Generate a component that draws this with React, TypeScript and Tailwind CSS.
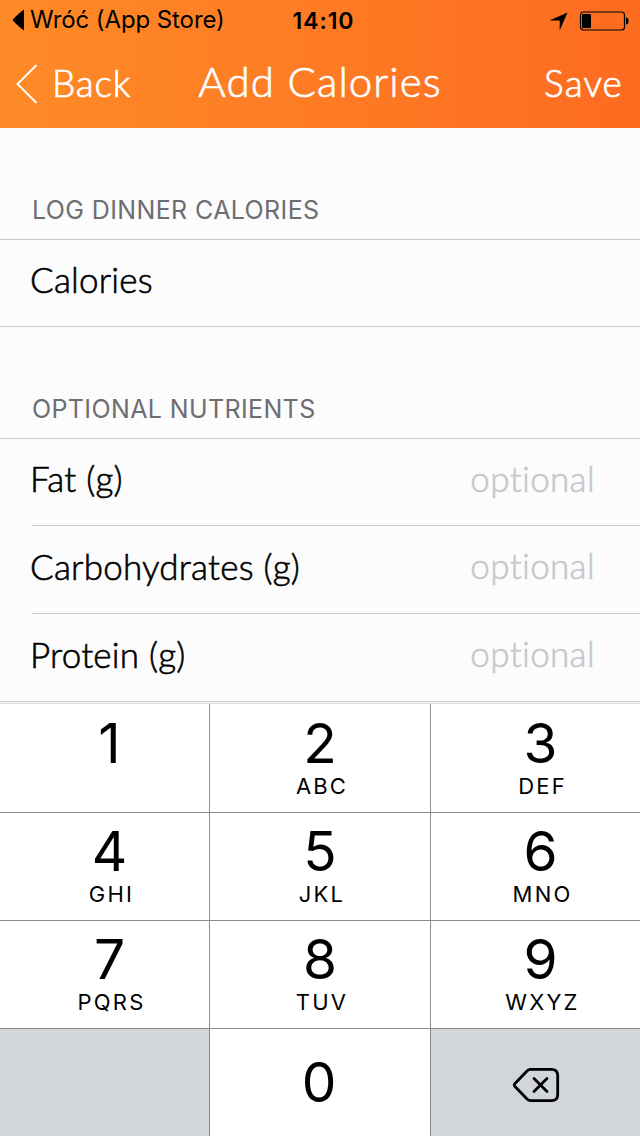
import React from 'react';

interface PadKey {
  digit: string;
  letters?: string;
}

const keyRows: PadKey[][] = [
  [{ digit: '1' }, { digit: '2', letters: 'ABC' }, { digit: '3', letters: 'DEF' }],
  [
    { digit: '4', letters: 'GHI' },
    { digit: '5', letters: 'JKL' },
    { digit: '6', letters: 'MNO' },
  ],
  [
    { digit: '7', letters: 'PQRS' },
    { digit: '8', letters: 'TUV' },
    { digit: '9', letters: 'WXYZ' },
  ],
];

const StatusBar: React.FC = () => (
  <div className="grid h-10 grid-cols-[1fr_auto_1fr] items-center font-['Inter',sans-serif] text-black">
    <div className="flex items-center pl-3">
      <svg width="12" height="22" viewBox="0 0 12 22">
        <path d="M12 0.5V21.5C8 19 4 15 0.5 11C4 7 8 3 12 0.5Z" fill="currentColor" />
      </svg>
      <span className="ml-[6px] text-[24px] leading-10 tracking-[-0.1px] whitespace-nowrap">
        Wróć (App Store)
      </span>
    </div>
    <span className="pt-[2px] pl-[7px] text-[23px] leading-[38px] font-semibold tracking-[0.9px]">14:10</span>
    <div className="flex items-center justify-end pr-[11px]">
      <svg className="mt-[2px]" width="19" height="19" viewBox="0 0 19 19">
        <path d="M18.5 0.5L10.7 18.5V8.6H0.5Z" fill="currentColor" />
      </svg>
      <svg className="mt-px ml-[11px]" width="50" height="20" viewBox="0 0 50 20">
        <rect x="1.5" y="1" width="44" height="18" rx="3" fill="none" stroke="currentColor" strokeWidth="1.2" />
        <rect x="3" y="3" width="9" height="14" rx="1" fill="currentColor" />
        <path d="M47 6.5C50.5 6.5 50.5 13.5 47 13.5Z" fill="currentColor" />
      </svg>
    </div>
  </div>
);

const NavBar: React.FC = () => (
  <div className="grid h-[88px] grid-cols-[1fr_auto_1fr] items-center font-['Lato',sans-serif] font-light text-white [-webkit-text-stroke:0.7px]">
    <button className="flex items-center pl-4">
      <svg width="22" height="40" viewBox="0 0 22 40" fill="none" stroke="currentColor" strokeWidth="2">
        <path d="M20.5 1L1.5 20L20.5 39" />
      </svg>
      <span className="ml-[14px] pb-[3px] text-[37px] leading-[44px] tracking-[0.8px]">Back</span>
    </button>
    <h1 className="pb-[6px] text-[42px] leading-[44px] tracking-[1.1px]">Add Calories</h1>
    <button className="pr-[17px] pb-[3px] text-right text-[37px] leading-[44px] tracking-[1.1px]">Save</button>
  </div>
);

const SectionTitle: React.FC<{ children: React.ReactNode }> = ({ children }) => (
  <h2 className="flex h-[112px] items-end border-b border-[#c8c7cc] pb-[13px] pl-8 font-['Inter',sans-serif] text-[25px] leading-[32px] font-normal tracking-[0.38px] text-[#6d6d72]">
    {children}
  </h2>
);

const FieldLabel: React.FC<{ children: React.ReactNode }> = ({ children }) => (
  <span className="-ml-[2px] pb-[8px] tracking-[0.22px] [-webkit-text-stroke:0.6px]">{children}</span>
);

const OptionalField: React.FC = () => (
  <span className="pb-[9px] tracking-[0.35px] text-[#c7c7cd] [-webkit-text-stroke:0.6px]">optional</span>
);

const NumberPad: React.FC = () => (
  <div className="grid grid-cols-[210px_221px_209px] bg-white font-['Inter',sans-serif] text-black">
    {keyRows.map((row, r) =>
      row.map((key, col) => (
        <button
          key={key.digit}
          className={`flex flex-col items-center border-b border-[#8c8c8c] ${
            r === 0 ? 'h-[109px] pt-[11px]' : 'h-[108px] pt-[10px]'
          } ${col < 2 ? 'border-r' : ''} ${col === 1 ? '' : 'pl-[10px]'}`}
        >
          <span className="text-[55px] leading-[56px]">{key.digit}</span>
          {key.letters && (
            <span className="pl-[4px] text-[22px] leading-[30px] tracking-[2.2px]">{key.letters}</span>
          )}
        </button>
      ))
    )}
    <div className="h-[107px] border-r border-[#8c8c8c] bg-[#d2d5da]" />
    <button className="flex h-[107px] items-center justify-center border-r border-[#8c8c8c] pr-[2px] pb-[2px] text-[55px] leading-[56px]">
      0
    </button>
    <button aria-label="Delete" className="flex h-[107px] items-center justify-center bg-[#d2d5da] pt-[4px]">
      <svg width="48" height="36" viewBox="0 0 48 36" fill="none" stroke="currentColor" strokeWidth="2.8" strokeLinecap="round" strokeLinejoin="round">
        <path d="M18.5 2.3H39.5C43.8 2.3 45.7 4.2 45.7 8.5V27.5C45.7 31.8 43.8 33.7 39.5 33.7H18.5C17 33.7 16 33 15 32L3 19.5C2 18.4 2 17.6 3 16.5L15 4C16 3 17 2.3 18.5 2.3Z" />
        <path d="M22 11.5L35 24.5M35 11.5L22 24.5" />
      </svg>
    </button>
  </div>
);

export default function App() {
  return (
    <div className="h-[1136px] w-[640px] overflow-hidden bg-[#fcfcfc]">
      <header className="h-32 bg-linear-to-r from-[#fe8a27] to-[#fd6b21]">
        <StatusBar />
        <NavBar />
      </header>

      <main className="border-b border-[#dcdcde] font-['Lato',sans-serif] text-[35px] leading-[44px] font-light text-black">
        <SectionTitle>LOG DINNER CALORIES</SectionTitle>
        <div className="flex h-[87px] items-center border-b border-[#c8c7cc] pl-8">
          <FieldLabel>Calories</FieldLabel>
        </div>

        <SectionTitle>OPTIONAL NUTRIENTS</SectionTitle>
        <div className="pl-8">
          <div className="flex h-[87px] items-center justify-between border-b border-[#c8c7cc] pr-[45px]">
            <FieldLabel>Fat (g)</FieldLabel>
            <OptionalField />
          </div>
          <div className="flex h-[88px] items-center justify-between border-b border-[#c8c7cc] pr-[45px]">
            <FieldLabel>Carbohydrates (g)</FieldLabel>
            <OptionalField />
          </div>
        </div>
        <div className="flex h-[88px] items-center justify-between border-b border-[#c8c7cc] pr-[45px] pl-8">
          <FieldLabel>Protein (g)</FieldLabel>
          <OptionalField />
        </div>
        <div className="h-px" />
      </main>

      <NumberPad />
    </div>
  );
}
